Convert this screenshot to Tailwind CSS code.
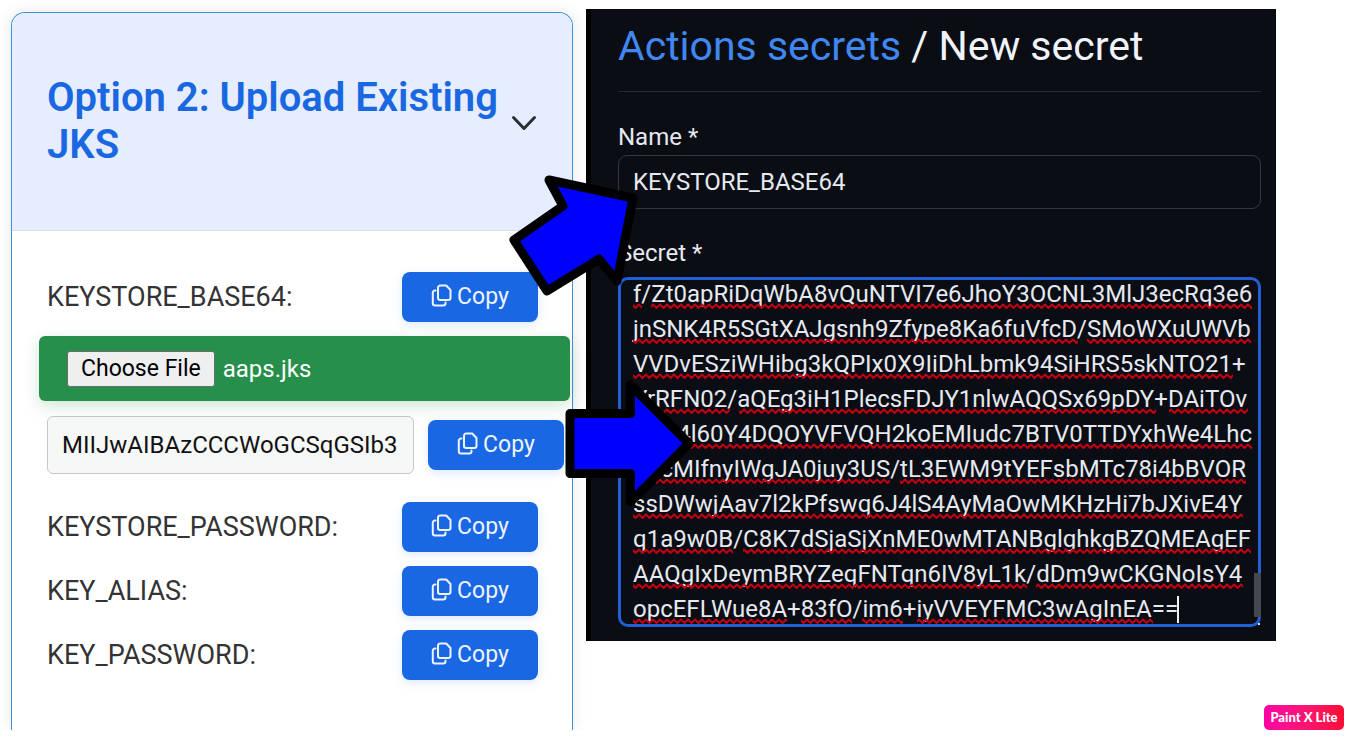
<!DOCTYPE html>
<html lang="en">
<head>
<meta charset="utf-8">
<meta name="viewport" content="width=device-width, initial-scale=1">
<title>Upload Existing JKS</title>
<script src="https://cdn.jsdelivr.net/npm/@tailwindcss/browser@4"></script>
</head>
<body class="relative h-screen overflow-hidden bg-white pb-2 font-['Roboto',sans-serif]">
<svg class="hidden" aria-hidden="true">
  <symbol id="copy" viewBox="0 0 21 23" fill="none" stroke="currentColor" stroke-width="2" stroke-linejoin="round" stroke-linecap="round">
    <path d="M9.200 1.500h6l4.300 4.500v7.800a2.200 2.200 0 0 1-2.200 2.200H9.200a2.200 2.200 0 0 1-2.200-2.200V3.700A2.200 2.200 0 0 1 9.200 1.500z"/>
    <path d="M4.500 6.500H4a2.200 2.200 0 0 0-2.200 2.200v10.600A2.200 2.200 0 0 0 4 21.500h8.300a2.200 2.200 0 0 0 2.200-2.200v-.8"/>
  </symbol>
</svg>

<main class="grid h-full grid-cols-[562fr_690fr] gap-[13px] overflow-hidden pr-[78px] pl-[11px]">
  <section class="mt-3 rounded-t-[14px] border border-b-0 border-[#3d8fe0] bg-white shadow-[0_0_16px_rgba(0,0,0,0.1)]">
    <header class="flex items-center justify-between rounded-t-[13px] border-b border-[#dadeea] bg-[#e5edff] px-[35px] pt-[61px] pb-[62px]">
      <h2 class="text-[40px] leading-[47px] font-semibold whitespace-nowrap text-[#1a67e2]">Option 2: Upload Existing<br>JKS</h2>
      <button type="button" aria-label="Collapse section" class="mt-1 text-[#2b2e33]">
        <svg class="h-4 w-[26px]" viewBox="0 0 26 16" fill="none" stroke="currentColor" stroke-width="3" stroke-linecap="round" stroke-linejoin="round"><path d="M2.500 2.500 13 13.500 23.500 2.500"/></svg>
      </button>
    </header>

    <div class="pt-[41px] pr-[34px] pl-[35px] text-[27px] leading-[30px] text-[#333]">
      <div class="flex h-[50px] items-center justify-between">
        <span>KEYSTORE_BASE64:</span>
        <button type="button" class="flex h-[50px] w-[136px] items-center justify-center gap-[5px] rounded-lg bg-[#1a67e4] text-[23px] text-[#eef4ff] shadow-[0_3px_10px_rgba(26,103,228,0.15)]"><svg class="mb-[3px] h-[23px] w-[21px]"><use href="#copy"/></svg>Copy</button>
      </div>

      <label for="jks" class="-mr-8 -ml-2 mt-[14px] flex h-[65px] items-center gap-2 rounded-md bg-[#258f4b] pl-7 text-white shadow-[0_5px_16px_rgba(37,143,75,0.22)]">
        <input id="jks" type="file" class="sr-only">
        <span class="rounded-[3px] border border-[#6c6c6c] bg-[#efefef] px-[13px] py-[2px] text-[23px] text-black">Choose File</span>
        <span class="text-[24px]">aaps.jks</span>
      </label>

      <div class="-mr-[26px] mt-[15px] flex items-center gap-[14px]">
        <input aria-label="KEYSTORE_BASE64 value" value="MIIJwAIBAzCCCWoGCSqGSIb3" readonly class="h-[58px] min-w-0 flex-1 rounded-md border border-[#c6c8c8] bg-[#f6f8f8] px-[14px] text-[24px] text-[#111]">
        <button type="button" class="flex h-[50px] w-[136px] items-center justify-center gap-[5px] rounded-lg bg-[#1a67e4] text-[23px] text-[#eef4ff] shadow-[0_3px_10px_rgba(26,103,228,0.15)]"><svg class="mb-[3px] h-[23px] w-[21px]"><use href="#copy"/></svg>Copy</button>
      </div>

      <div class="mt-7 flex flex-col gap-[14px]">
        <div class="flex h-[50px] items-center justify-between">
          <span>KEYSTORE_PASSWORD:</span>
          <button type="button" class="flex h-[50px] w-[136px] items-center justify-center gap-[5px] rounded-lg bg-[#1a67e4] text-[23px] text-[#eef4ff] shadow-[0_3px_10px_rgba(26,103,228,0.15)]"><svg class="mb-[3px] h-[23px] w-[21px]"><use href="#copy"/></svg>Copy</button>
        </div>
        <div class="flex h-[50px] items-center justify-between">
          <span>KEY_ALIAS:</span>
          <button type="button" class="flex h-[50px] w-[136px] items-center justify-center gap-[5px] rounded-lg bg-[#1a67e4] text-[23px] text-[#eef4ff] shadow-[0_3px_10px_rgba(26,103,228,0.15)]"><svg class="mb-[3px] h-[23px] w-[21px]"><use href="#copy"/></svg>Copy</button>
        </div>
        <div class="flex h-[50px] items-center justify-between">
          <span>KEY_PASSWORD:</span>
          <button type="button" class="flex h-[50px] w-[136px] items-center justify-center gap-[5px] rounded-lg bg-[#1a67e4] text-[23px] text-[#eef4ff] shadow-[0_3px_10px_rgba(26,103,228,0.15)]"><svg class="mb-[3px] h-[23px] w-[21px]"><use href="#copy"/></svg>Copy</button>
        </div>
      </div>
    </div>
  </section>

  <section class="mt-[9px] flex flex-col self-start border-l-[5px] border-black bg-[#0a0d14] pr-[15px] pb-[14px] pl-[27px] text-[#e6e9f0]">
    <h1 class="border-b border-[#26292f] pt-[12px] pb-[20px] text-[41px] leading-[50px] text-[#f0f3f9]"><a href="#" class="text-[#4087f0]">Actions secrets</a> / New secret</h1>
    <label for="name" class="mt-[31px] text-[24px] leading-[28px]">Name *</label>
    <input id="name" value="KEYSTORE_BASE64" class="mt-[4px] h-[54px] rounded-[9px] border border-[#34373f] px-[14px] text-[24px]">
    <label for="secret" class="mt-[30px] text-[24px] leading-[28px]">Secret *</label>
    <div class="relative mt-[10px]">
      <textarea id="secret" rows="10" spellcheck="false" class="block h-[350px] w-full resize-none overflow-hidden rounded-[10px] border-[3px] border-[#215fd6] pl-3 text-[24px] leading-[35px] whitespace-pre">f/Zt0apRiDqWbA8vQuNTVI7e6JhoY3OCNL3MlJ3ecRq3e6
jnSNK4R5SGtXAJgsnh9Zfype8Ka6fuVfcD/SMoWXuUWVb
VVDvESziWHibg3kQPIx0X9IiDhLbmk94SiHRS5skNTO21+
YrRFN02/aQEg3iH1PlecsFDJY1nlwAQQSx69pDY+DAiTOv
EbN4l60Y4DQOYVFVQH2koEMIudc7BTV0TTDYxhWe4Lhc
DzcMIfnyIWgJA0juy3US/tL3EWM9tYEFsbMTc78i4bBVOR
ssDWwjAav7l2kPfswq6J4lS4AyMaOwMKHzHi7bJXivE4Y
q1a9w0B/C8K7dSjaSjXnME0wMTANBglghkgBZQMEAgEF
AAQgIxDeymBRYZeqFNTqn6IV8yL1k/dDm9wCKGNoIsY4
opcEFLWue8A+83fO/im6+iyVVEYFMC3wAgInEA==</textarea>

      <!-- Spelling marks, one row of rects per text line -->
      <svg class="pointer-events-none absolute inset-0 h-full w-full" aria-hidden="true">
        <defs>
          <pattern id="wave" width="7" height="35" patternUnits="userSpaceOnUse" y="24">
            <path d="M-1.750 1.500 0 1.500 3.500 5 7 1.500 8.750 1.500" fill="none" stroke="#c20012" stroke-width="2" stroke-linejoin="round"/>
          </pattern>
        </defs>
        <g fill="url(#wave)" transform="translate(0 2)">
          <rect x="15" y="24" width="9" height="7"/><rect x="33" y="24" width="601" height="7"/>
          <rect x="15" y="59" width="445" height="7"/><rect x="469" y="59" width="164" height="7"/>
          <rect x="15" y="94" width="600" height="7"/>
          <rect x="15" y="129" width="97" height="7"/><rect x="121" y="129" width="417" height="7"/><rect x="551" y="129" width="79" height="7"/>
          <rect x="15" y="164" width="619" height="7"/>
          <rect x="15" y="199" width="257" height="7"/><rect x="282" y="199" width="346" height="7"/>
          <rect x="15" y="234" width="610" height="7"/>
          <rect x="15" y="269" width="100" height="7"/><rect x="125" y="269" width="508" height="7"/>
          <rect x="15" y="304" width="394" height="7"/><rect x="418" y="304" width="207" height="7"/>
          <rect x="15" y="339" width="154" height="7"/><rect x="183" y="339" width="51" height="7"/><rect x="244" y="339" width="41" height="7"/><rect x="299" y="339" width="236" height="7"/>
        </g>
        <rect x="559" y="319" width="2" height="27" fill="#f0f3f9"/>
      </svg>
      <span class="absolute right-0 bottom-[10px] h-11 w-[7px] bg-[#45474f]"></span>
      <span class="absolute right-[1px] bottom-[2px] h-[2px] w-[2px] bg-[#d8dbe2]"></span>
    </div>
  </section>
</main>

<!-- Annotation arrows drawn over both panels -->
<svg class="pointer-events-none absolute top-0 left-0 h-[738px] w-[1354px]" viewBox="0 0 1354 738" fill="#0000ff" stroke="#000" stroke-width="9" stroke-linejoin="round" aria-hidden="true">
  <path d="M549 180 633 198 617 281 599 259 547 291 514 240 563 206z"/>
  <path d="M570 413.500H630.500V385L689 443.500 630.500 502V473.500H570z"/>
</svg>

<div class="absolute right-[10px] bottom-2 flex h-[25px] w-20 items-center justify-center rounded-[5px] bg-gradient-to-r from-[#ff00a6] to-[#fb0a32] font-['Lato',sans-serif] text-[13px] font-black whitespace-nowrap text-white">Paint X Lite</div>

<script>
  document.getElementById('secret').scrollTop = 3;
</script>
</body>
</html>
